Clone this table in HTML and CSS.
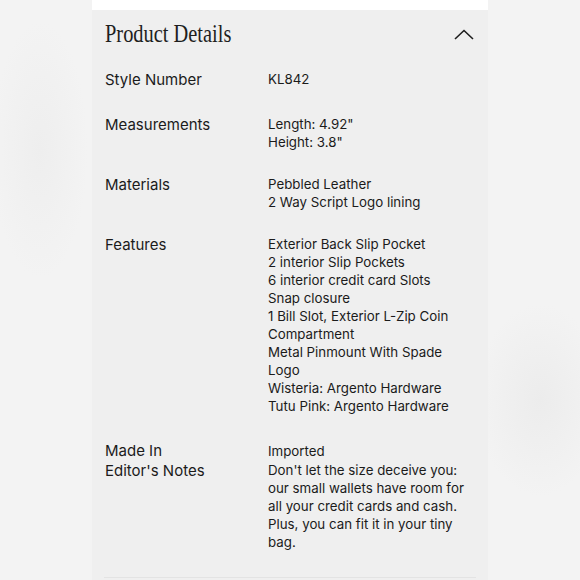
FILE: index.html
```html
<!DOCTYPE html>
<html>
<head>
<meta charset="utf-8">
<link rel="stylesheet" href="styles.css">
</head>
<body>
<div class="stage">
  <div class="panel">
    <div class="topstrip"></div>
    <div class="header">
      <h2 class="title"><span>Product Details</span></h2>
      <svg class="chev" width="20" height="11" viewBox="0 0 20 11"><path d="M1 10 L10 1.5 L19 10" fill="none" stroke="#1e1e1e" stroke-width="1.6"/></svg>
    </div>
    <div class="details">
      <div class="row first">
        <div class="label">Style Number</div>
        <div class="value">KL842</div>
      </div>
      <div class="row">
        <div class="label">Measurements</div>
        <div class="value">Length: 4.92"<br>Height: 3.8"</div>
      </div>
      <div class="row">
        <div class="label">Materials</div>
        <div class="value">Pebbled Leather<br>2 Way Script Logo lining</div>
      </div>
      <div class="row last">
        <div class="label">Features</div>
        <div class="value">Exterior Back Slip Pocket<br>2 interior Slip Pockets<br>6 interior credit card Slots<br>Snap closure<br>1 Bill Slot, Exterior L-Zip Coin Compartment<br>Metal Pinmount With Spade Logo<br>Wisteria: Argento Hardware<br>Tutu Pink: Argento Hardware</div>
      </div>
      <div class="row tight">
        <div class="label">Made In</div>
        <div class="value single">Imported</div>
      </div>
      <div class="row tight">
        <div class="label">Editor's Notes</div>
        <div class="value">Don't let the size deceive you: our small wallets have room for all your credit cards and cash. Plus, you can fit it in your tiny bag.</div>
      </div>
    </div>
    <div class="rule"></div>
  </div>
</div>
</body>
</html>
```
FILE: styles.css
```css
* { box-sizing: border-box; }
html, body { margin: 0; padding: 0; }
body {
  width: 580px;
  height: 580px;
  overflow: hidden;
  background: #f3f3f3;
  font-family: Inter, "Liberation Sans", sans-serif;
  color: #1b1b1b;
}
.stage {
  height: 580px;
  display: flex;
  justify-content: center;
  background:
    radial-gradient(ellipse 60px 160px at 40px 150px, #eeeeee, rgba(243,243,243,0) 80%),
    radial-gradient(ellipse 80px 120px at 540px 400px, #ececec, rgba(243,243,243,0) 80%),
    #f3f3f3;
}
.panel {
  width: 396px;
  background: #efefef;
  display: flex;
  flex-direction: column;
}
.topstrip {
  height: 10px;
  background: #ffffff;
}
.header {
  display: flex;
  align-items: center;
  justify-content: space-between;
  padding: 0 14px 0 13px;
  height: 48px;
}
.title {
  margin: 0;
  font-family: "Liberation Serif", serif;
  font-weight: normal;
  font-size: 25.5px;
  color: #1e1e1e;
  line-height: 30px;
  white-space: nowrap;
}
.title span {
  display: inline-block;
  transform: scaleX(0.8);
  transform-origin: left center;
}
.chev { display: block; margin-top: 1px; }
.details {
  padding: 12px 0 0 13px;
  display: flex;
  flex-direction: column;
}
.row {
  display: grid;
  grid-template-columns: 163px 205px;
  margin-bottom: 24px;
}
.row.first { margin-bottom: 25px; }
.row.last { margin-bottom: 26px; }
.row.tight { margin-bottom: 0; }
.label {
  font-size: 15px;
  line-height: 20px;
}
.value {
  font-size: 13.3px;
  line-height: 18px;
}
.value.single { line-height: 20px; }
.rule {
  margin: auto 12px 2px 12px;
  height: 1px;
  background: #e3e3e3;
}
```
